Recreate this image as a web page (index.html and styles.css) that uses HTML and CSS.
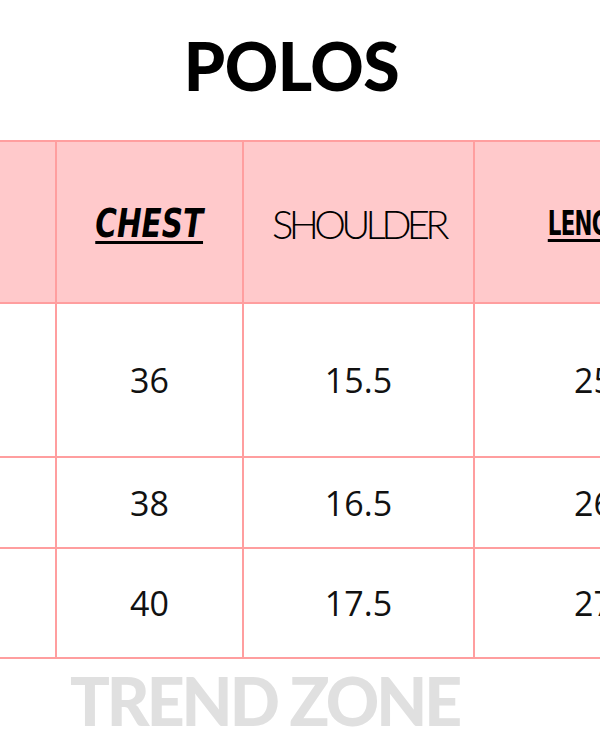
FILE: index.html
```html
<!DOCTYPE html>
<html lang="en">
<head>
<meta charset="utf-8">
<title>Polos size chart</title>
<link rel="stylesheet" href="styles.css">
</head>
<body>
<div class="page">
  <h1 class="title">POLOS</h1>
  <div class="chart">
    <div class="grid">
      <div class="cell head"></div>
      <div class="cell head"><span class="h-chest">CHEST</span></div>
      <div class="cell head"><span class="h-shoulder">SHOULDER</span></div>
      <div class="cell head"><span class="h-length">LENGTH</span></div>

      <div class="cell row1"></div>
      <div class="cell row1 num">36</div>
      <div class="cell row1 num">15.5</div>
      <div class="cell row1 num">25</div>

      <div class="cell row2"></div>
      <div class="cell row2 num">38</div>
      <div class="cell row2 num">16.5</div>
      <div class="cell row2 num">26</div>

      <div class="cell row3"></div>
      <div class="cell row3 num">40</div>
      <div class="cell row3 num">17.5</div>
      <div class="cell row3 num">27</div>
    </div>
  </div>
  <div class="brand">TREND ZONE</div>
</div>
</body>
</html>
```
FILE: styles.css
```css
html, body {
  margin: 0;
  padding: 0;
  background: #ffffff;
}
.page {
  width: 600px;
  height: 750px;
  overflow: hidden;
  background: #ffffff;
}
.title {
  margin: 0;
  box-sizing: border-box;
  height: 140px;
  padding-top: 33px;
  padding-right: 17px;
  font-family: Lato, "Open Sans", sans-serif;
  font-weight: 900;
  font-size: 66px;
  line-height: 66px;
  letter-spacing: -0.5px;
  text-align: center;
  color: #000000;
}
.chart {
  width: 600px;
  overflow: hidden;
}
.grid {
  display: grid;
  width: 714px;
  grid-template-columns: 55px 185px 229px 237px;
  grid-template-rows: 160px 152px 89px 108px;
  gap: 2px;
  background: #ff9e9f;
  border-top: 2px solid #ff9e9f;
  border-bottom: 2px solid #ff9e9f;
  border-right: 2px solid #ff9e9f;
}
.cell {
  background: #ffffff;
  display: flex;
  align-items: center;
  justify-content: center;
}
.head {
  background: #ffc9cb;
  padding-top: 3px;
}
.num {
  font-family: "Open Sans", Lato, sans-serif;
  font-size: 34px;
  color: #111111;
}
.h-chest {
  display: inline-block;
  font-family: "Liberation Sans Narrow", "DejaVu Sans Condensed", sans-serif;
  font-weight: 700;
  font-style: italic;
  font-size: 39px;
  letter-spacing: 0;
  color: #000;
  text-decoration: underline;
  text-decoration-thickness: 3px;
  text-underline-offset: 4px;
  transform: scaleX(0.84);
}
.h-shoulder {
  font-family: Lato, sans-serif;
  font-weight: 300;
  font-size: 40px;
  letter-spacing: -4.7px;
  color: #000;
}
.h-length {
  display: inline-block;
  font-family: "Liberation Sans Narrow", "DejaVu Sans Condensed", sans-serif;
  font-weight: 700;
  font-size: 33px;
  letter-spacing: -1px;
  color: #000;
  text-decoration: underline;
  text-decoration-thickness: 3px;
  text-underline-offset: 4px;
  transform: scaleX(0.72);
}
.brand {
  margin-top: 9px;
  padding-left: 70px;
  font-family: Lato, "Open Sans", sans-serif;
  font-weight: 900;
  font-size: 66px;
  line-height: 66px;
  letter-spacing: -3px;
  color: #e0e0e0;
}
```
